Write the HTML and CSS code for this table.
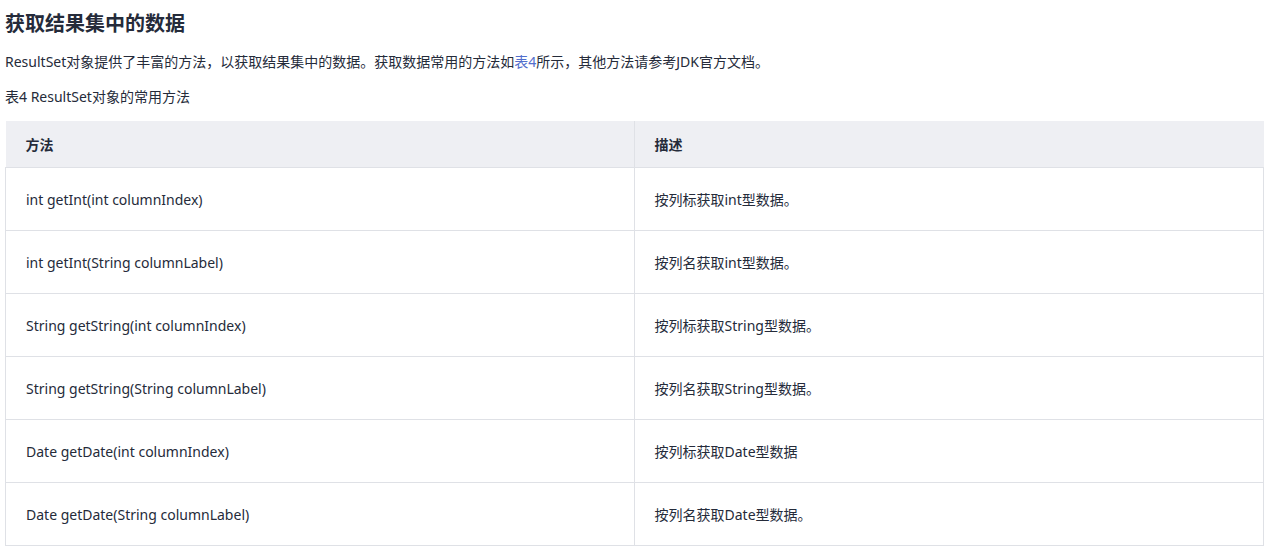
FILE: index.html
```html
<!DOCTYPE html>
<html lang="zh-CN">
<head>
<meta charset="utf-8">
<link rel="stylesheet" href="styles.css">
</head>
<body>
<div class="doc">
  <h2 class="title">获取结果集中的数据</h2>
  <p class="para">ResultSet对象提供了丰富的方法，以获取结果集中的数据。获取数据常用的方法如<a class="link" href="#t4">表4</a>所示，其他方法请参考JDK官方文档。</p>
  <p class="caption" id="t4">表4 ResultSet对象的常用方法</p>
  <table class="tbl">
    <thead>
      <tr><th class="c1">方法</th><th>描述</th></tr>
    </thead>
    <tbody>
      <tr><td class="c1">int getInt(int columnIndex)</td><td>按列标获取int型数据。</td></tr>
      <tr><td class="c1">int getInt(String columnLabel)</td><td>按列名获取int型数据。</td></tr>
      <tr><td class="c1">String getString(int columnIndex)</td><td>按列标获取String型数据。</td></tr>
      <tr><td class="c1">String getString(String columnLabel)</td><td>按列名获取String型数据。</td></tr>
      <tr><td class="c1">Date getDate(int columnIndex)</td><td>按列标获取Date型数据</td></tr>
      <tr><td class="c1">Date getDate(String columnLabel)</td><td>按列名获取Date型数据。</td></tr>
    </tbody>
  </table>
</div>
</body>
</html>
```
FILE: styles.css
```css
html, body { margin: 0; padding: 0; background: #fff; }
body {
  font-family: "Noto Sans", "Noto Sans CJK SC", sans-serif;
  color: #252b3a;
}
.doc { padding: 0 22px 0 5px; }
.title {
  margin: 0;
  padding-top: 9px;
  font-size: 20px;
  line-height: 30px;
  font-weight: 700;
  color: #252b3a;
}
.para {
  margin: 12px 0 0;
  font-size: 14px;
  line-height: 22px;
}
.link { color: #526ecc; text-decoration: none; }
.caption {
  margin: 13px 0 0;
  font-size: 14px;
  line-height: 22px;
}
.tbl {
  margin-top: 13px;
  width: 1259px;
  border-collapse: collapse;
  table-layout: fixed;
  font-size: 14px;
}
.tbl th, .tbl td {
  border: 1px solid #dfe1e6;
  text-align: left;
  padding: 0 20px;
  vertical-align: middle;
}
.tbl th {
  background: #eeeff3;
  height: 46px;
  font-weight: 700;
  border-top: none;
  border-left: none;
  border-right: none;
}
.tbl th.c1 { border-right: 1px solid #dfe1e6; }
.tbl td { height: 62px; }
.tbl .c1 { width: 588px; }
```
